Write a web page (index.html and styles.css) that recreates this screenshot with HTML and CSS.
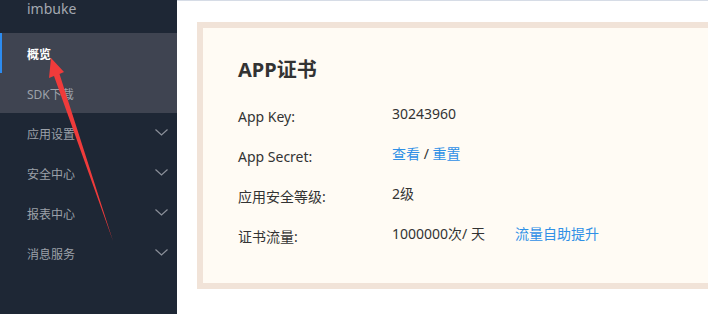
FILE: index.html
```html
<!DOCTYPE html>
<html lang="zh-CN">
<head>
    <meta charset="UTF-8">
    <meta name="viewport" content="width=device-width, initial-scale=1.0">
    <title>APP证书</title>
    <link rel="stylesheet" href="styles.css">
</head>
<body>

<div class="layout">
    <div class="sidebar">
        <div class="brand">imbuke</div>
        <div class="menu-group">
            <div class="menu-item active">概览</div>
            <div class="menu-item">SDK下载</div>
        </div>
        <div class="menu-item">应用设置
            <svg class="chevron" width="13" height="7" viewBox="0 0 13 7"><polyline points="0.5,0.5 6.5,6 12.5,0.5" fill="none" stroke="#8b909a" stroke-width="1.2"/></svg>
        </div>
        <div class="menu-item">安全中心
            <svg class="chevron" width="13" height="7" viewBox="0 0 13 7"><polyline points="0.5,0.5 6.5,6 12.5,0.5" fill="none" stroke="#8b909a" stroke-width="1.2"/></svg>
        </div>
        <div class="menu-item">报表中心
            <svg class="chevron" width="13" height="7" viewBox="0 0 13 7"><polyline points="0.5,0.5 6.5,6 12.5,0.5" fill="none" stroke="#8b909a" stroke-width="1.2"/></svg>
        </div>
        <div class="menu-item">消息服务
            <svg class="chevron" width="13" height="7" viewBox="0 0 13 7"><polyline points="0.5,0.5 6.5,6 12.5,0.5" fill="none" stroke="#8b909a" stroke-width="1.2"/></svg>
        </div>
    </div>

    <div class="main">
        <div class="card">
            <h2 class="card-title">APP证书</h2>
            <div class="row">
                <div class="label">App Key:</div>
                <div class="value">30243960</div>
            </div>
            <div class="row">
                <div class="label">App Secret:</div>
                <div class="value"><a class="link">查看</a> / <a class="link">重置</a></div>
            </div>
            <div class="row">
                <div class="label">应用安全等级:</div>
                <div class="value">2级</div>
            </div>
            <div class="row">
                <div class="label">证书流量:</div>
                <div class="value">1000000次/ 天<a class="link upgrade">流量自助提升</a></div>
            </div>
        </div>
    </div>
</div>

<!-- annotation arrow drawn over the page -->
<svg class="arrow" width="708" height="314" viewBox="0 0 708 314">
    <polygon points="51,58 64,72 59.5,74 113,241 54,76 49,78" fill="#ef3b3b"/>
</svg>

</body>
</html>
```

FILE: styles.css
```css
body {
    margin: 0;
    font-family: "Noto Sans", "Noto Sans CJK SC", sans-serif;
    color: #333;
    overflow: hidden;
}
.layout {
    display: flex;
    height: 314px;
}
.sidebar {
    width: 177px;
    flex-shrink: 0;
    background-color: #1e2735;
}
.brand {
    height: 33px;
    line-height: 18px;
    padding-left: 27px;
    font-size: 14px;
    color: #a4a9b1;
}
.menu-group {
    background-color: #3f4451;
}
.menu-item {
    position: relative;
    box-sizing: border-box;
    height: 40px;
    line-height: 40px;
    padding: 2px 0 0 27px;
    overflow: hidden;
    font-size: 12px;
    color: #9ca1a9;
}
.menu-item.active {
    color: #fff;
    font-weight: bold;
    box-shadow: inset 2px 0 0 #2d8cf0;
}
.chevron {
    position: absolute;
    left: 155px;
    top: 16px;
}
.main {
    flex: 1;
    border-top: 1px solid #d6dce6;
    background-color: #fff;
    padding: 21px 0 0 20px;
}
.card {
    box-sizing: border-box;
    height: 267px;
    border: 6px solid #f1e3d8;
    border-right: 0;
    background-color: #fffbf4;
    padding: 30px 0 0 35px;
}
.card-title {
    margin: 0 0 22px;
    font-size: 20px;
    line-height: 24px;
    font-weight: bold;
    color: #333;
}
.row {
    display: flex;
    height: 40px;
    font-size: 14px;
    line-height: 20px;
}
.label {
    width: 154px;
    padding-top: 3px;
}
.link {
    color: #2f90e6;
    cursor: pointer;
}
.upgrade {
    margin-left: 30px;
}
.arrow {
    position: absolute;
    left: 0;
    top: 0;
    pointer-events: none;
}
```
